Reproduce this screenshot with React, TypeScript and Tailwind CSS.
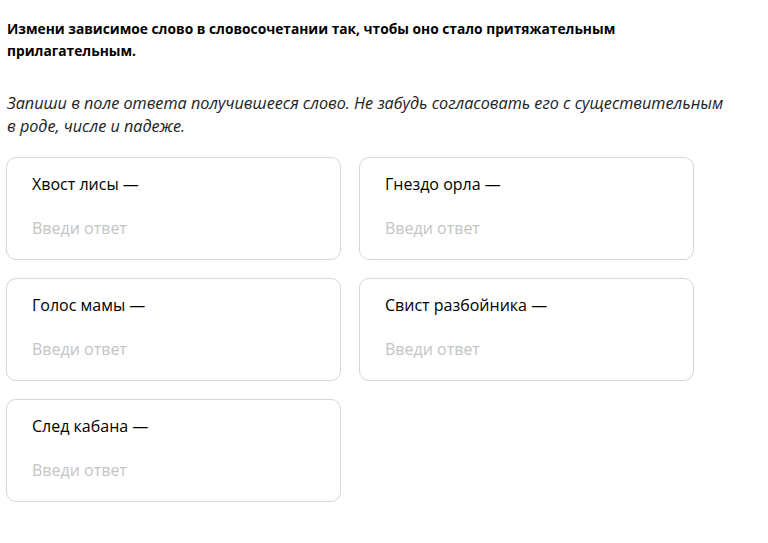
const items = [
  'Хвост лисы —',
  'Гнездо орла —',
  'Голос мамы —',
  'Свист разбойника —',
  'След кабана —',
];

export default function App() {
  return (
    <div className="min-h-[543px] bg-white pt-[18px] pl-[7px] text-black" style={{ fontFamily: '"Open Sans", sans-serif' }}>
      <p className="w-[640px] text-[13.75px] font-bold leading-[22px]">
        Измени зависимое слово в словосочетании так, чтобы оно стало притяжательным прилагательным.
      </p>
      <p className="mt-[30px] w-[718px] text-[16.2px] italic leading-[23px] text-[#222]">
        Запиши в поле ответа получившееся слово. Не забудь согласовать его с существительным в роде, числе и падеже.
      </p>
      <div className="mt-[19px] -ml-px grid w-[688px] grid-cols-2 gap-[18px]">
        {items.map((label) => (
          <div key={label} className="h-[103px] rounded-[10px] border border-[#d6d6d6] px-[25px] pt-[14px]">
            <div className="text-[16px] leading-[24px]">{label}</div>
            <input
              className="mt-[20px] w-full text-[16px] leading-[24px] outline-none placeholder:text-[#c4c4c4]"
              placeholder="Введи ответ"
            />
          </div>
        ))}
      </div>
    </div>
  );
}
